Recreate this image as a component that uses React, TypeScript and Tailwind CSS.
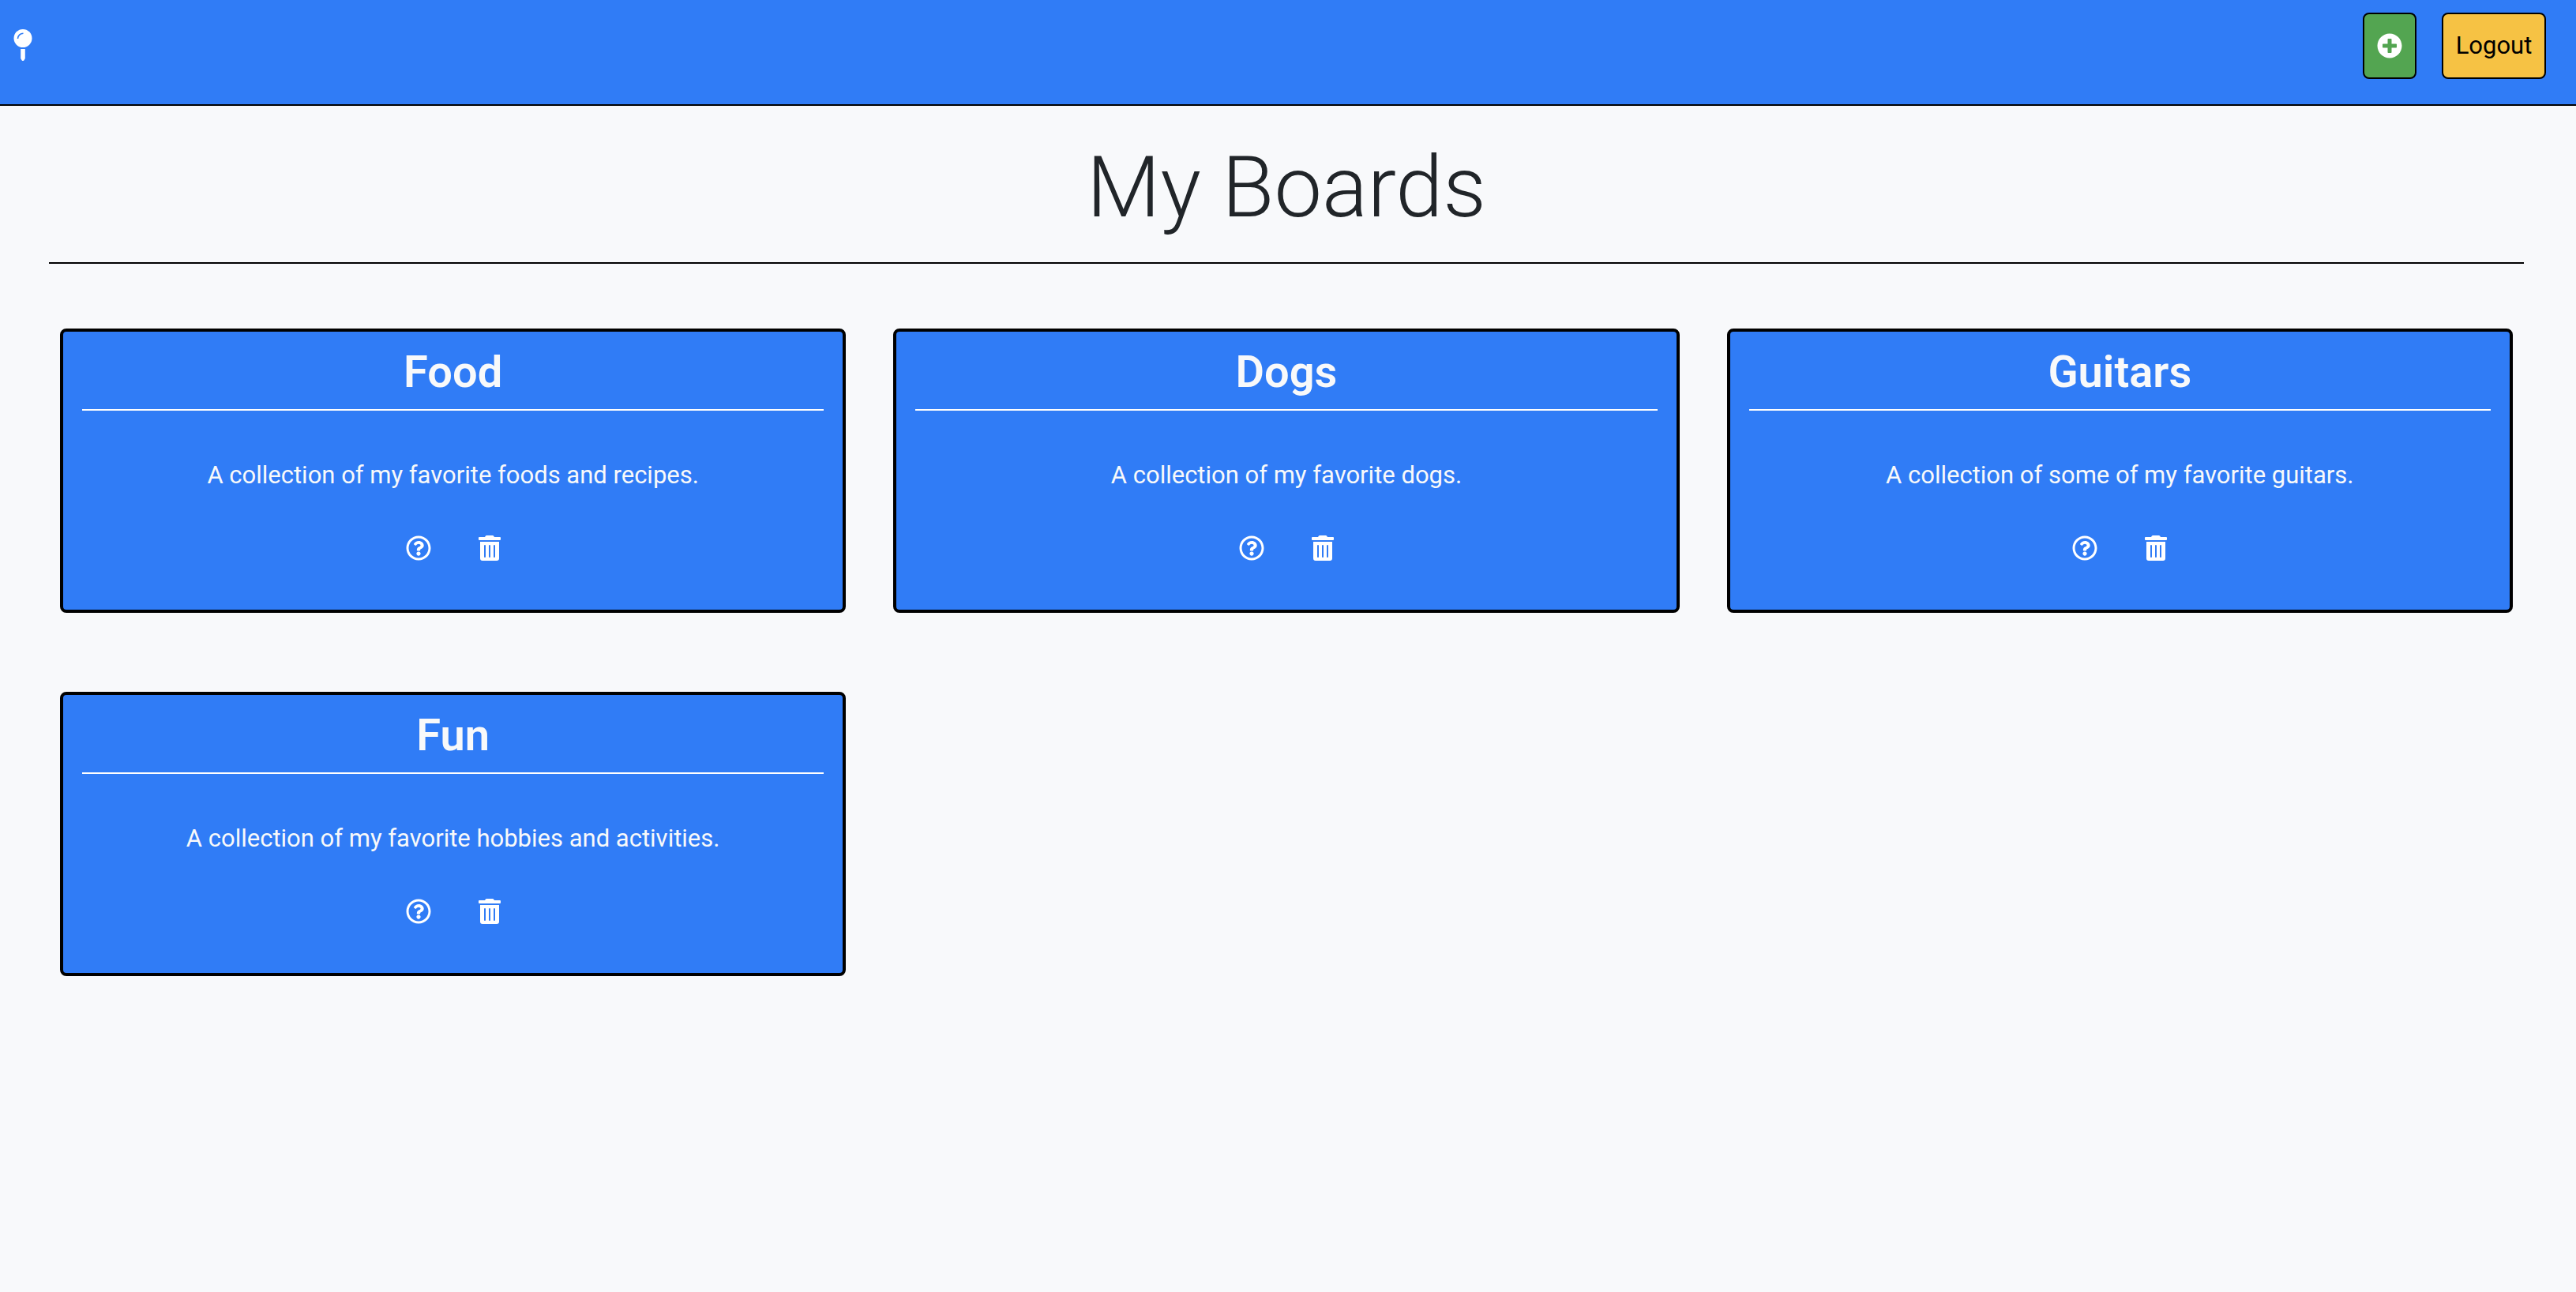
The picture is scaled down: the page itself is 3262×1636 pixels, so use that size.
import React from "react";
import { FaPlusCircle, FaRegQuestionCircle } from "react-icons/fa";

const boards = [
  { name: "Food", text: "A collection of my favorite foods and recipes." },
  { name: "Dogs", text: "A collection of my favorite dogs." },
  { name: "Guitars", text: "A collection of some of my favorite guitars." },
  { name: "Fun", text: "A collection of my favorite hobbies and activities." },
];

function PinIcon() {
  return (
    <svg viewBox="0 0 24 40" className="h-10 w-6" fill="currentColor" aria-hidden="true">
      <circle cx="12" cy="11.5" r="11.5" />
      <path d="M5.5 12 A7 7 0 0 1 12.5 5.2" fill="none" stroke="#307cf6" strokeWidth="1.6" />
      <path d="M9.2 25 H14.8 V37 L13.3 39.5 Q12 40.5 10.7 39.5 L9.2 37 Z" />
    </svg>
  );
}

function TrashIcon() {
  return (
    <svg viewBox="0 0 28 32" className="h-8 w-7" fill="currentColor" aria-hidden="true">
      <path d="M1 2 H8 L9 .6 Q9.4 0 10.2 0 H17.8 Q18.6 0 19 .6 L20 2 H27 Q28 2 28 3 V5 Q28 6 27 6 H1 Q0 6 0 5 V3 Q0 2 1 2 Z" />
      <path fillRule="evenodd" d="M2 8 H26 V29 Q26 32 23 32 H5 Q2 32 2 29 Z M7 13 V27 Q7 28 8 28 Q9 28 9 27 V13 Q9 12 8 12 Q7 12 7 13 Z M13 13 V27 Q13 28 14 28 Q15 28 15 27 V13 Q15 12 14 12 Q13 12 13 13 Z M19 13 V27 Q19 28 20 28 Q21 28 21 27 V13 Q21 12 20 12 Q19 12 19 13 Z" />
    </svg>
  );
}

function BoardCard({ name, text }: { name: string; text: string }) {
  return (
    <article className="flex flex-col items-center rounded-lg border-4 border-black bg-[#307cf6] px-6 pt-[18px] pb-[62px] text-center text-[#f8f9fa]">
      <h2 className="w-full border-b-2 border-white pb-3.5 text-[56px] leading-[66px] font-semibold">{name}</h2>
      <p className="mt-[58px] text-[31px] leading-[48px]">{text}</p>
      <div className="mt-[52px] flex gap-[60px] text-white">
        <button type="button" aria-label={`About ${name}`}>
          <FaRegQuestionCircle className="size-8" />
        </button>
        <button type="button" aria-label={`Delete ${name}`}>
          <TrashIcon />
        </button>
      </div>
    </article>
  );
}

export default function App() {
  return (
    <div className="min-h-screen bg-[#f8f9fb] font-['Roboto',sans-serif] text-[#212529]">
      <header className="flex items-start justify-between border-b-2 border-black bg-[#307cf6] pt-4 pr-[38px] pb-8 pl-[17px]">
        <a href="#" aria-label="Home" className="mt-[21px] text-white">
          <PinIcon />
        </a>
        <nav className="flex gap-8">
          <button type="button" aria-label="Add board" className="flex h-[84px] w-[68px] items-center justify-center rounded-lg border-2 border-black bg-[#53a551] text-white">
            <FaPlusCircle className="size-8" />
          </button>
          <button type="button" className="h-[84px] w-[132px] rounded-lg border-2 border-black bg-[#f6c244] text-[31px] text-black">
            Logout
          </button>
        </nav>
      </header>
      <main className="pr-[66px] pl-[62px]">
        <h1 className="border-b-2 border-black pt-9 pb-7 text-center text-[108px] leading-[134px] font-light">My Boards</h1>
        <section className="mt-[82px] grid grid-cols-3 gap-x-[60px] gap-y-[100px] px-3.5">
          {boards.map((board) => (
            <BoardCard key={board.name} name={board.name} text={board.text} />
          ))}
        </section>
      </main>
    </div>
  );
}
